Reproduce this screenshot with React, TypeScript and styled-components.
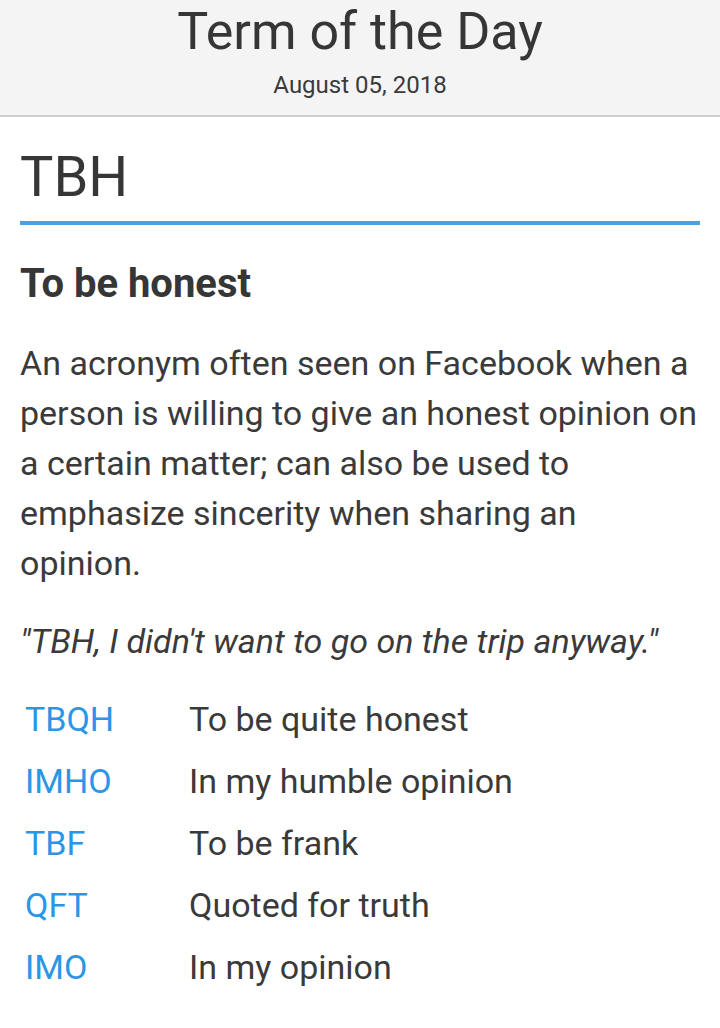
import React from "react";
import styled, { createGlobalStyle } from "styled-components";

const Global = createGlobalStyle`
  html, body { margin: 0; padding: 0; background: #ffffff; }
  body { font-family: Roboto, "Noto Sans", "Liberation Sans", sans-serif; color: #363636; }
  * { box-sizing: border-box; }
`;

const Header = styled.header`
  background: #f4f4f4;
  border-bottom: 2px solid #cfcfcf;
  padding: 2px 20px 15px;
  text-align: center;
`;

const SiteTitle = styled.h1`
  margin: 0;
  font-size: 52px;
  line-height: 60px;
  font-weight: 400;
  color: #363636;
`;

const DateLine = styled.div`
  margin-top: 8px;
  font-size: 24px;
  line-height: 30px;
  color: #3a3a3a;
`;

const Main = styled.main`
  padding: 0 20px;
`;

const Term = styled.h2`
  margin: 28px 0 0;
  padding-bottom: 12px;
  border-bottom: 4px solid #47a2e3;
  font-size: 56px;
  line-height: 64px;
  font-weight: 400;
  color: #363636;
`;

const Meaning = styled.h3`
  margin: 36px 0 0;
  font-size: 40px;
  line-height: 46px;
  font-weight: 700;
  color: #363636;
`;

const Definition = styled.p`
  margin: 31px 0 0;
  font-size: 34px;
  line-height: 50px;
  color: #3a3a3a;
`;

const Example = styled.p`
  margin: 28px 0 0;
  font-size: 34px;
  line-height: 50px;
  font-style: italic;
  color: #3a3a3a;
`;

const RelatedList = styled.div`
  margin-top: 22px;
  display: grid;
  grid-template-columns: 164px 1fr;
  padding-left: 5px;
`;

const Abbr = styled.a`
  font-size: 34px;
  line-height: 62px;
  color: #2b96e6;
  text-decoration: none;
`;

const Expansion = styled.span`
  font-size: 34px;
  line-height: 62px;
  color: #3a3a3a;
`;

const related = [
  ["TBQH", "To be quite honest"],
  ["IMHO", "In my humble opinion"],
  ["TBF", "To be frank"],
  ["QFT", "Quoted for truth"],
  ["IMO", "In my opinion"],
];

export default function App() {
  return (
    <>
      <Global />
      <Header>
        <SiteTitle>Term of the Day</SiteTitle>
        <DateLine>August 05, 2018</DateLine>
      </Header>
      <Main>
        <Term>TBH</Term>
        <Meaning>To be honest</Meaning>
        <Definition>
          An acronym often seen on Facebook when a person is willing to give an honest opinion on a
          certain matter; can also be used to emphasize sincerity when sharing an opinion.
        </Definition>
        <Example>"TBH, I didn't want to go on the trip anyway."</Example>
        <RelatedList>
          {related.map(([a, e]) => (
            <React.Fragment key={a}>
              <Abbr href="#">{a}</Abbr>
              <Expansion>{e}</Expansion>
            </React.Fragment>
          ))}
        </RelatedList>
      </Main>
    </>
  );
}
